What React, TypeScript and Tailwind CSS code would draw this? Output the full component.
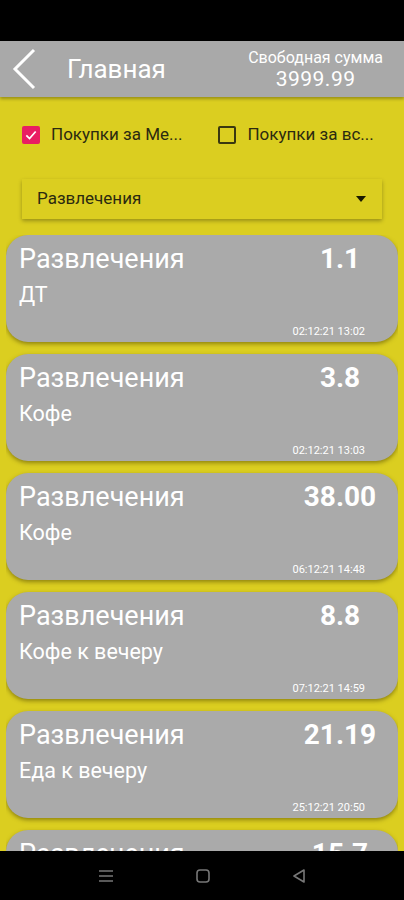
const items = [
  { amount: "1.1", note: "ДТ", date: "02:12:21 13:02" },
  { amount: "3.8", note: "Кофе", date: "02:12:21 13:03" },
  { amount: "38.00", note: "Кофе", date: "06:12:21 14:48" },
  { amount: "8.8", note: "Кофе к вечеру", date: "07:12:21 14:59" },
  { amount: "21.19", note: "Еда к вечеру", date: "25:12:21 20:50" },
  { amount: "15.7", note: "Кофе", date: "26:12:21 10:11" },
];

function Card({ amount, note, date }: { amount: string; note: string; date: string }) {
  return (
    <div className="h-[107px] shrink-0 rounded-[22px] bg-[#aaaaaa] pl-[13px] pr-[33px] pt-[8px] text-white shadow-[0_2px_4px_rgba(80,70,0,0.55)]">
      <div className="flex items-center justify-between">
        <span className="text-[27px] leading-[32px]">Развлечения</span>
        <span className="-mr-[30px] w-[110px] text-center text-[28px] font-bold leading-[32px]">{amount}</span>
      </div>
      <div className="mt-[7px] text-[21.5px] leading-[26px]">{note}</div>
      <div className="mt-[17px] text-right text-[11px] leading-[14px]">{date}</div>
    </div>
  );
}

export default function App() {
  return (
    <div className="flex h-[900px] w-[404px] flex-col overflow-hidden bg-[#dbce20] font-['Roboto',sans-serif]">
      <div className="h-[41px] shrink-0 bg-black" />
      {/* Header */}
      <div className="flex h-[56px] shrink-0 items-center bg-[#a9a9a9] text-white shadow-[0_2px_3px_rgba(0,0,0,0.3)]">
        <svg width="26" height="42" viewBox="0 0 26 42" className="ml-[11px]">
          <path d="M23 2 L4 21 L23 40" fill="none" stroke="white" strokeWidth="3" />
        </svg>
        <span className="ml-[30px] text-[26px] leading-none">Главная</span>
        <div className="ml-auto mr-[21px] flex flex-col items-center">
          <span className="text-[16px] leading-[19px]">Свободная сумма</span>
          <span className="text-[21px] leading-[24px] tracking-[0.5px]">3999.99</span>
        </div>
      </div>

      {/* Filters */}
      <div className="mt-[28px] flex h-[20px] shrink-0 items-center text-[17px] text-[#2b2a10]">
        <div className="ml-[22px] flex items-center">
          <div className="flex h-[18px] w-[18px] items-center justify-center rounded-[2px] bg-[#e91e63]">
            <svg width="14" height="14" viewBox="0 0 24 24">
              <path d="M4 12.5 L9.5 18 L20 6" fill="none" stroke="white" strokeWidth="3" />
            </svg>
          </div>
          <span className="ml-[11px]">Покупки за Ме...</span>
        </div>
        <div className="ml-[36px] flex items-center">
          <div className="h-[18px] w-[18px] rounded-[2px] border-2 border-[#3a3810]" />
          <span className="ml-[11px]">Покупки за вс...</span>
        </div>
      </div>

      {/* Dropdown */}
      <div className="mx-[22px] mt-[34px] flex h-[40px] shrink-0 items-center justify-between bg-[#dbce20] pl-[15px] pr-[16px] text-[17px] text-[#2b2a10] shadow-[0_2px_4px_rgba(0,0,0,0.3)]">
        <span>Развлечения</span>
        <svg width="10" height="6" viewBox="0 0 10 6">
          <path d="M0 0 L10 0 L5 6 Z" fill="#1a1a00" />
        </svg>
      </div>

      {/* List */}
      <div className="mx-[6px] mt-[16px] flex min-h-0 flex-1 flex-col gap-[12px] overflow-hidden">
        {items.map((it, i) => (
          <Card key={i} {...it} />
        ))}
      </div>

      {/* Nav bar */}
      <div className="flex h-[49px] shrink-0 items-center justify-center gap-[82px] bg-black">
        <svg width="16" height="14" viewBox="0 0 16 14">
          <path d="M1 2 H15 M1 7 H15 M1 12 H15" stroke="#777" strokeWidth="1.6" />
        </svg>
        <svg width="14" height="14" viewBox="0 0 14 14">
          <rect x="1" y="1" width="12" height="12" rx="3" fill="none" stroke="#777" strokeWidth="1.6" />
        </svg>
        <svg width="14" height="14" viewBox="0 0 14 14">
          <path d="M12 1 L2 7 L12 13 Z" fill="none" stroke="#777" strokeWidth="1.6" strokeLinejoin="round" />
        </svg>
      </div>
    </div>
  );
}
